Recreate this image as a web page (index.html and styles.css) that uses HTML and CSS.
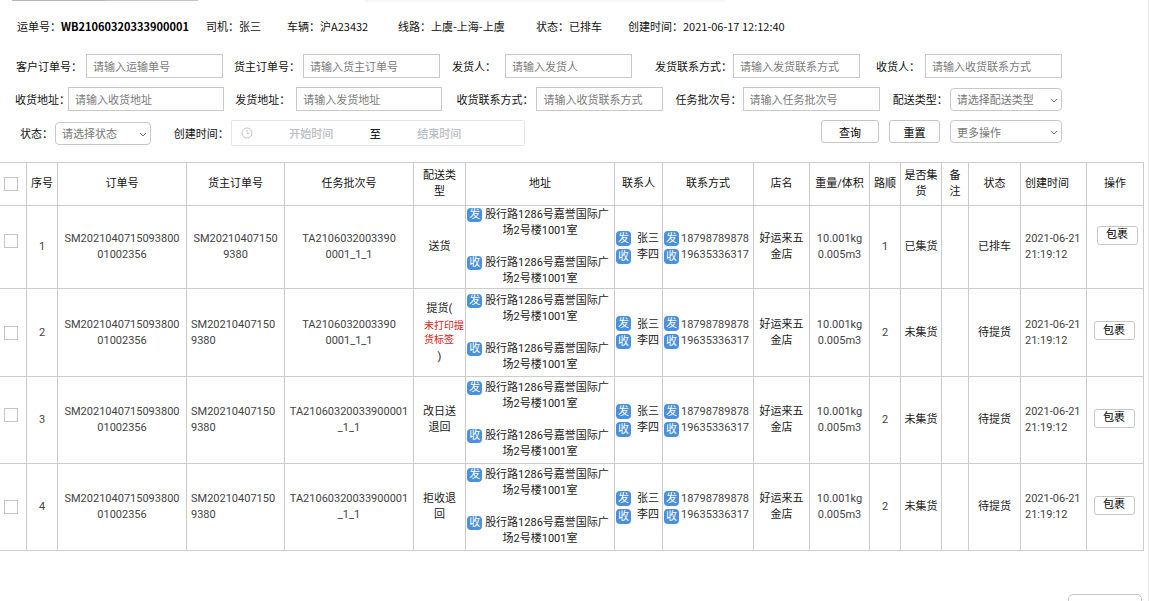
FILE: index.html
```html
<!DOCTYPE html>
<html lang="zh-CN">
<head>
<meta charset="utf-8">
<title>运单</title>
<link rel="stylesheet" href="styles.css">
</head>
<body>
<main class="page">
  <div class="tabs"><span class="tab-line"></span><span class="tab-shade"></span></div>

  <header class="summary">
    <span>运单号：<strong>WB21060320333900001</strong></span>
    <span>司机：张三</span>
    <span>车辆：沪A23432</span>
    <span>线路：上虞-上海-上虞</span>
    <span>状态：已排车</span>
    <span>创建时间：2021-06-17 12:12:40</span>
  </header>

  <form class="filters">
    <div class="filter-row row-order">
      <div class="field"><label class="l-70" for="f1">客户订单号：</label><input class="w-137" id="f1" type="text" placeholder="请输入运输单号"></div>
      <div class="field"><label class="l-69" for="f2">货主订单号：</label><input class="w-137" id="f2" type="text" placeholder="请输入货主订单号"></div>
      <div class="field"><label class="l-53" for="f3">发货人：</label><input class="w-127" id="f3" type="text" placeholder="请输入发货人"></div>
      <div class="field"><label class="l-78" for="f4">发货联系方式：</label><input class="w-127" id="f4" type="text" placeholder="请输入发货联系方式"></div>
      <div class="field"><label class="l-49" for="f5">收货人：</label><input class="w-137" id="f5" type="text" placeholder="请输入收货联系方式"></div>
    </div>
    <div class="filter-row row-address">
      <div class="field"><label class="l-53" for="f6">收货地址：</label><input class="w-156" id="f6" type="text" placeholder="请输入收货地址"></div>
      <div class="field"><label class="l-61" for="f7">发货地址：</label><input class="w-146" id="f7" type="text" placeholder="请输入发货地址"></div>
      <div class="field"><label class="l-80" for="f8">收货联系方式：</label><input class="w-127" id="f8" type="text" placeholder="请输入收货联系方式"></div>
      <div class="field"><label class="l-67" for="f9">任务批次号：</label><input class="w-137" id="f9" type="text" placeholder="请输入任务批次号"></div>
      <div class="field"><label class="l-57" for="f10">配送类型：</label>
        <span class="select w-112"><select id="f10"><option>请选择配送类型</option></select><svg viewBox="0 0 8 5"><path d="M1 1l3 3 3-3"/></svg></span></div>
    </div>
    <div class="filter-row row-actions">
      <div class="field"><label class="l-35" for="f11">状态：</label>
        <span class="select w-96"><select id="f11"><option>请选择状态</option></select><svg viewBox="0 0 8 5"><path d="M1 1l3 3 3-3"/></svg></span></div>
      <div class="field"><label class="l-57" for="f12">创建时间：</label>
        <div class="range">
          <svg class="clock" viewBox="0 0 12 12"><circle cx="6" cy="6" r="5"/><path d="M6 3v3.500h2.500"/></svg>
          <input id="f12" type="text" placeholder="开始时间"><span>至</span><input type="text" aria-label="结束时间" placeholder="结束时间">
        </div></div>
      <div class="actions">
        <button class="btn w-58" type="button">查询</button>
        <button class="btn w-51" type="button">重置</button>
        <span class="select w-112"><select aria-label="更多操作"><option>更多操作</option></select><svg viewBox="0 0 8 5"><path d="M1 1l3 3 3-3"/></svg></span>
      </div>
    </div>
  </form>

  <table class="orders">
    <colgroup>
      <col class="c-check"><col class="c-31"><col class="c-129"><col class="c-98"><col class="c-129"><col class="c-52"><col class="c-149"><col class="c-48"><col class="c-91"><col class="c-56"><col class="c-60"><col class="c-31"><col class="c-41"><col class="c-check"><col class="c-52"><col class="c-66"><col class="c-57">
    </colgroup>
    <thead>
      <tr>
        <th class="check"><input type="checkbox" aria-label="全选"></th>
        <th>序号</th><th>订单号</th><th>货主订单号</th><th>任务批次号</th><th>配送类<br>型</th><th>地址</th><th>联系人</th><th>联系方式</th><th>店名</th><th>重量/体积</th><th>路顺</th><th>是否集<br>货</th><th>备<br>注</th><th>状态</th><th class="left">创建时间</th><th>操作</th>
      </tr>
    </thead>
    <tbody>
      <tr class="first">
        <td class="check"><input type="checkbox" aria-label="1"></td>
        <td class="num">1</td>
        <td class="num">SM2021040715093800<br>01002356</td>
        <td class="num">SM20210407150<br>9380</td>
        <td class="num">TA2106032003390<br>0001_1_1</td>
        <td>送货</td>
        <td class="address"><p><i class="badge">发</i>股行路1286号嘉誉国际广<br>场2号楼1001室</p><p><i class="badge">收</i>股行路1286号嘉誉国际广<br>场2号楼1001室</p></td>
        <td><div class="pair name"><div class="badges"><i class="badge">发</i><i class="badge">收</i></div><div>张三<br>李四</div></div></td>
        <td class="num"><div class="pair"><div class="badges"><i class="badge">发</i><i class="badge">收</i></div><div>18798789878<br>19635336317</div></div></td>
        <td>好运来五<br>金店</td><td class="num">10.001kg<br>0.005m3</td><td class="num">1</td><td>已集货</td><td></td><td>已排车</td>
        <td class="left num">2021-06-21<br>21:19:12</td>
        <td class="op"><button class="btn small" type="button">包裹</button></td>
      </tr>
      <tr class="tall">
        <td class="check"><input type="checkbox" aria-label="2"></td>
        <td class="num">2</td>
        <td class="num">SM2021040715093800<br>01002356</td>
        <td class="left num">SM20210407150<br>9380</td>
        <td class="num">TA2106032003390<br>0001_1_1</td>
        <td>提货(<span class="warning">未打印提<br>货标签</span>)</td>
        <td class="address"><p><i class="badge">发</i>股行路1286号嘉誉国际广<br>场2号楼1001室</p><p><i class="badge">收</i>股行路1286号嘉誉国际广<br>场2号楼1001室</p></td>
        <td><div class="pair name"><div class="badges"><i class="badge">发</i><i class="badge">收</i></div><div>张三<br>李四</div></div></td>
        <td class="num"><div class="pair"><div class="badges"><i class="badge">发</i><i class="badge">收</i></div><div>18798789878<br>19635336317</div></div></td>
        <td>好运来五<br>金店</td><td class="num">10.001kg<br>0.005m3</td><td class="num">2</td><td>未集货</td><td></td><td>待提货</td>
        <td class="left num">2021-06-21<br>21:19:12</td>
        <td class="op"><button class="btn small" type="button">包裹</button></td>
      </tr>
      <tr class="raised">
        <td class="check"><input type="checkbox" aria-label="3"></td>
        <td class="num">3</td>
        <td class="num">SM2021040715093800<br>01002356</td>
        <td class="left num">SM20210407150<br>9380</td>
        <td class="num">TA21060320033900001<br>_1_1</td>
        <td>改日送<br>退回</td>
        <td class="address"><p><i class="badge">发</i>股行路1286号嘉誉国际广<br>场2号楼1001室</p><p><i class="badge">收</i>股行路1286号嘉誉国际广<br>场2号楼1001室</p></td>
        <td><div class="pair name"><div class="badges"><i class="badge">发</i><i class="badge">收</i></div><div>张三<br>李四</div></div></td>
        <td class="num"><div class="pair"><div class="badges"><i class="badge">发</i><i class="badge">收</i></div><div>18798789878<br>19635336317</div></div></td>
        <td>好运来五<br>金店</td><td class="num">10.001kg<br>0.005m3</td><td class="num">2</td><td>未集货</td><td></td><td>待提货</td>
        <td class="left num">2021-06-21<br>21:19:12</td>
        <td class="op"><button class="btn small" type="button">包裹</button></td>
      </tr>
      <tr>
        <td class="check"><input type="checkbox" aria-label="4"></td>
        <td class="num">4</td>
        <td class="num">SM2021040715093800<br>01002356</td>
        <td class="left num">SM20210407150<br>9380</td>
        <td class="num">TA21060320033900001<br>_1_1</td>
        <td>拒收退<br>回</td>
        <td class="address"><p><i class="badge">发</i>股行路1286号嘉誉国际广<br>场2号楼1001室</p><p><i class="badge">收</i>股行路1286号嘉誉国际广<br>场2号楼1001室</p></td>
        <td><div class="pair name"><div class="badges"><i class="badge">发</i><i class="badge">收</i></div><div>张三<br>李四</div></div></td>
        <td class="num"><div class="pair"><div class="badges"><i class="badge">发</i><i class="badge">收</i></div><div>18798789878<br>19635336317</div></div></td>
        <td>好运来五<br>金店</td><td class="num">10.001kg<br>0.005m3</td><td class="num">2</td><td>未集货</td><td></td><td>待提货</td>
        <td class="left num">2021-06-21<br>21:19:12</td>
        <td class="op"><button class="btn small" type="button">包裹</button></td>
      </tr>
    </tbody>
  </table>

  <footer class="footer"><button class="btn w-74" type="button"></button></footer>
</main>
</body>
</html>
```
FILE: styles.css
```css
* { box-sizing: border-box; }

body {
  margin: 0;
  background: #fff;
  color: #222;
  font: 11px/16px "Noto Sans CJK SC", sans-serif;
}

.page {
  height: 100vh;
  overflow: hidden;
  padding-right: 4px;
  border-right: 1px solid #efefef;
}

input, select, button { font: inherit; color: inherit; margin: 0; }

/* top edge */
.tabs { display: flex; gap: 167px; height: 2px; padding-left: 12px; }
.tab-line { width: 186px; height: 1px; background: linear-gradient(90deg, #b9b7ae 50%, #c4c4c4 50%); }
.tab-shade { width: 360px; background: #f7f7f7; }

/* waybill summary */
.summary {
  display: grid;
  grid-template-columns: 189fr 81fr 111fr 138fr 92fr 516fr;
  align-items: center;
  height: 52px;
  padding: 0 0 4px 17px;
  color: #111;
  white-space: nowrap;
}
.summary strong { font-weight: 700; color: #000; }

/* filters */
.filters { display: flex; flex-direction: column; gap: 9px; }
.filter-row { display: grid; align-items: center; padding-left: 16px; }
.row-order { grid-template-columns: 218fr 218fr 203fr 221fr 268fr; }
.row-address { grid-template-columns: 220fr 221fr 219fr 217fr 251fr; padding-left: 15px; }
.row-actions { grid-template-columns: 154fr 400fr 489fr; padding-left: 20px; padding-right: 82px; }
.field { display: flex; align-items: center; }
.field label { flex: none; color: #111; white-space: nowrap; }

.l-35 { width: 35px; }
.l-49 { width: 49px; }
.l-53 { width: 53px; }
.l-57 { width: 57px; }
.l-61 { width: 61px; }
.l-67 { width: 67px; }
.l-69 { width: 69px; }
.l-70 { width: 70px; }
.l-78 { width: 78px; }
.l-80 { width: 80px; }

.w-51 { width: 51px; }
.w-58 { width: 58px; }
.w-74 { width: 74px; }
.w-96 { width: 96px; }
.w-112 { width: 112px; }
.w-127 { width: 127px; }
.w-137 { width: 137px; }
.w-146 { width: 146px; }
.w-156 { width: 156px; }

.field > input {
  height: 24px;
  padding: 0 6px;
  border: 1px solid #c9c9c9;
  background: #fff;
}
input::placeholder { color: #7b7b7b; opacity: 1; }

.select { position: relative; display: block; }
.select select {
  display: block;
  width: 100%;
  height: 23px;
  padding: 0 6px;
  border: 1px solid #c9c9c9;
  border-radius: 4px;
  background: #fff;
  color: #777;
  appearance: none;
}
.select svg {
  position: absolute;
  right: 4px;
  top: 10px;
  width: 8px;
  height: 5px;
  fill: none;
  stroke: #777;
  pointer-events: none;
}

.range {
  display: flex;
  align-items: center;
  width: 294px;
  height: 26px;
  padding: 0 26px 0 9px;
  border: 1px solid #e4e6ea;
  border-radius: 2px;
  font-weight: 500;
}
.range input {
  flex: 1;
  min-width: 0;
  padding: 0;
  border: 0;
  background: none;
  text-align: center;
}
.range input::placeholder { color: #b9bdc6; }
.clock { flex: none; width: 12px; height: 12px; fill: none; stroke: #c3c6cc; }

.actions { display: flex; align-self: start; justify-content: flex-end; gap: 10px; }

.btn {
  height: 23px;
  padding: 0;
  border: 1px solid #c6c6c6;
  border-radius: 3px;
  background: #fff;
  color: #000;
  line-height: 16px;
}
.btn.small { width: 41px; height: 19px; }

/* orders table */
.orders {
  width: 100%;
  margin-top: 16px;
  border-collapse: separate;
  border-spacing: 0;
  border-top: 1px solid #ccc;
  table-layout: fixed;
  font-family: Roboto, "Noto Sans CJK SC", sans-serif;
}
.c-check { width: 27px; }
.c-31 { width: 31px; }
.c-41 { width: 41px; }
.c-48 { width: 48px; }
.c-52 { width: 52px; }
.c-56 { width: 56px; }
.c-57 { width: 57px; }
.c-60 { width: 60px; }
.c-66 { width: 66px; }
.c-91 { width: 91px; }
.c-98 { width: 98px; }
.c-129 { width: 129px; }
.c-149 { width: 149px; }

.orders th, .orders td {
  padding: 0;
  border-right: 1px solid #ccc;
  border-bottom: 1px solid #ccc;
  font-weight: 400;
  text-align: center;
  vertical-align: middle;
  white-space: nowrap;
}
.orders th { height: 43px; color: #111; }
.orders td { height: 87px; }
.orders .first td { height: 83px; }
.orders .tall td { height: 88px; }
.orders .num { color: #444; }
.orders .left { padding-left: 4px; text-align: left; }
.orders .check { padding-left: 4px; text-align: left; }
.orders .first .check { padding-bottom: 12px; }
.orders .raised .check { padding-bottom: 10px; }
.orders .op { padding: 0 2px 4px 0; }
.orders .first .op { padding: 0 0 24px 4px; }

.check input {
  display: block;
  width: 14px;
  height: 14px;
  border: 1px solid #c4c4c4;
  background: #fff;
  appearance: none;
}

.address p { margin: 0; }
.address p + p { margin-top: 16px; }
.badge {
  display: inline-block;
  width: 15px;
  height: 15px;
  border-radius: 4px;
  background: #4a90dc;
  color: #fff;
  font-style: normal;
  line-height: 15px;
  text-align: center;
}
.address .badge { height: 14px; margin: 0 3px 0 -4px; line-height: 14px; }

.pair { display: flex; align-items: center; gap: 2px; padding-left: 1px; }
.pair.name { gap: 6px; }
.badges { display: flex; flex-direction: column; gap: 3px; }

.warning {
  display: block;
  padding: 2px 0 2px 10px;
  color: #e02020;
  font-size: 10px;
  line-height: 14px;
  text-align: left;
}

.footer { display: flex; justify-content: flex-end; padding: 43px 2px 0 0; }
.footer .btn { height: 24px; border-radius: 5px; }
```
